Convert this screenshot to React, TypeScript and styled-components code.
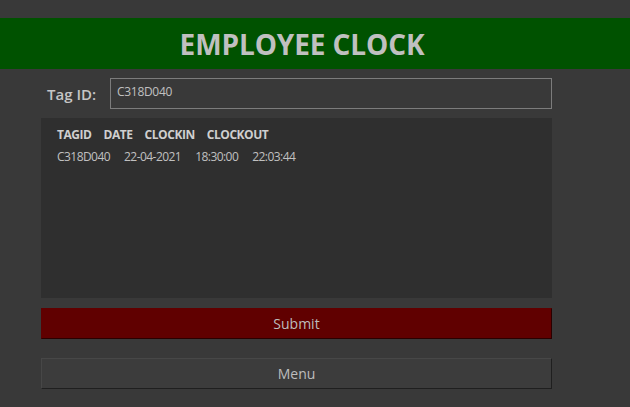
import styled, { createGlobalStyle } from 'styled-components';

const GlobalStyle = createGlobalStyle`
    html, body {
        margin: 0;
        padding: 0;
        background: #393939;
        font-family: "Open Sans", "Liberation Sans", sans-serif;
        color: #c4c4c4;
    }
`;

const Page = styled.div`
    width: 630px;
    min-height: 407px;
    padding-top: 18px;
    box-sizing: border-box;
`;
const Header = styled.div`
    height: 51px;
    background: #005200;
    display: flex;
    align-items: center;
    justify-content: center;
    padding-right: 26px;
`;
const Title = styled.h1`
    margin: 0;
    font-size: 28px;
    font-weight: 700;
    color: #c0c0c0;
    letter-spacing: -0.1px;
`;
const Main = styled.div`
    width: 511px;
    margin-left: 41px;
    display: flex;
    flex-direction: column;
`;
const TagRow = styled.div`
    margin-top: 9px;
    height: 31px;
    display: flex;
    align-items: center;
    padding-left: 6px;
`;
const Label = styled.label`
    width: 63px;
    font-size: 15px;
    font-weight: 600;
    color: #c6c6c6;
`;
const TagInput = styled.input`
    flex: 1;
    height: 31px;
    box-sizing: border-box;
    padding: 2px 6px 6px;
    background: transparent;
    border: 1px solid #7c7c7c;
    color: #c0c0c0;
    font-family: inherit;
    font-size: 12px;
    letter-spacing: -0.3px;
    outline: none;
`;
const Panel = styled.div`
    margin-top: 9px;
    height: 180px;
    background: #2f2f2f;
    padding: 9px 16px;
    box-sizing: border-box;
`;
const Row = styled.div<{head?: boolean}>`
    display: flex;
    gap: ${props => props.head ? "12px" : "14px"};
    font-size: 12px;
    line-height: 16px;
    letter-spacing: ${props => props.head ? "-0.45px" : "-0.55px"};
    font-weight: ${props => props.head ? "700" : "400"};
    margin-bottom: ${props => props.head ? "6px" : "0"};
    color: ${props => props.head ? "#cfcfcf" : "#c0c0c0"};
`;
const Button = styled.button<{variant: "submit" | "menu"}>`
    height: 31px;
    width: 100%;
    box-sizing: border-box;
    font-family: inherit;
    font-size: 14px;
    color: #bdbdbd;
    background: ${props => props.variant === "submit" ? "#600000" : "#3c3c3c"};
    border: 1px solid;
    border-color: ${props => props.variant === "submit"
        ? "#600000 #2a0000 #2a0000 #600000"
        : "#474747 #1f1f1f #1f1f1f #474747"};
    margin-top: ${props => props.variant === "submit" ? "10px" : "19px"};
    padding: 0;
`;

const columns = ["TAGID", "DATE", "CLOCKIN", "CLOCKOUT"];
const records = [
    { tagId: "C318D040", date: "22-04-2021", clockIn: "18:30:00", clockOut: "22:03:44" }
];

const App = () => {
    return (
        <Page>
            <GlobalStyle />
            <Header>
                <Title>EMPLOYEE CLOCK</Title>
            </Header>
            <Main>
                <TagRow>
                    <Label>Tag ID:</Label>
                    <TagInput readOnly value="C318D040" />
                </TagRow>
                <Panel>
                    <Row head>
                        {columns.map(col => <span key={col}>{col}</span>)}
                    </Row>
                    {records.map(rec => (
                        <Row key={rec.tagId}>
                            <span>{rec.tagId}</span>
                            <span>{rec.date}</span>
                            <span>{rec.clockIn}</span>
                            <span>{rec.clockOut}</span>
                        </Row>
                    ))}
                </Panel>
                <Button variant="submit">Submit</Button>
                <Button variant="menu">Menu</Button>
            </Main>
        </Page>
    );
};
export default App;
